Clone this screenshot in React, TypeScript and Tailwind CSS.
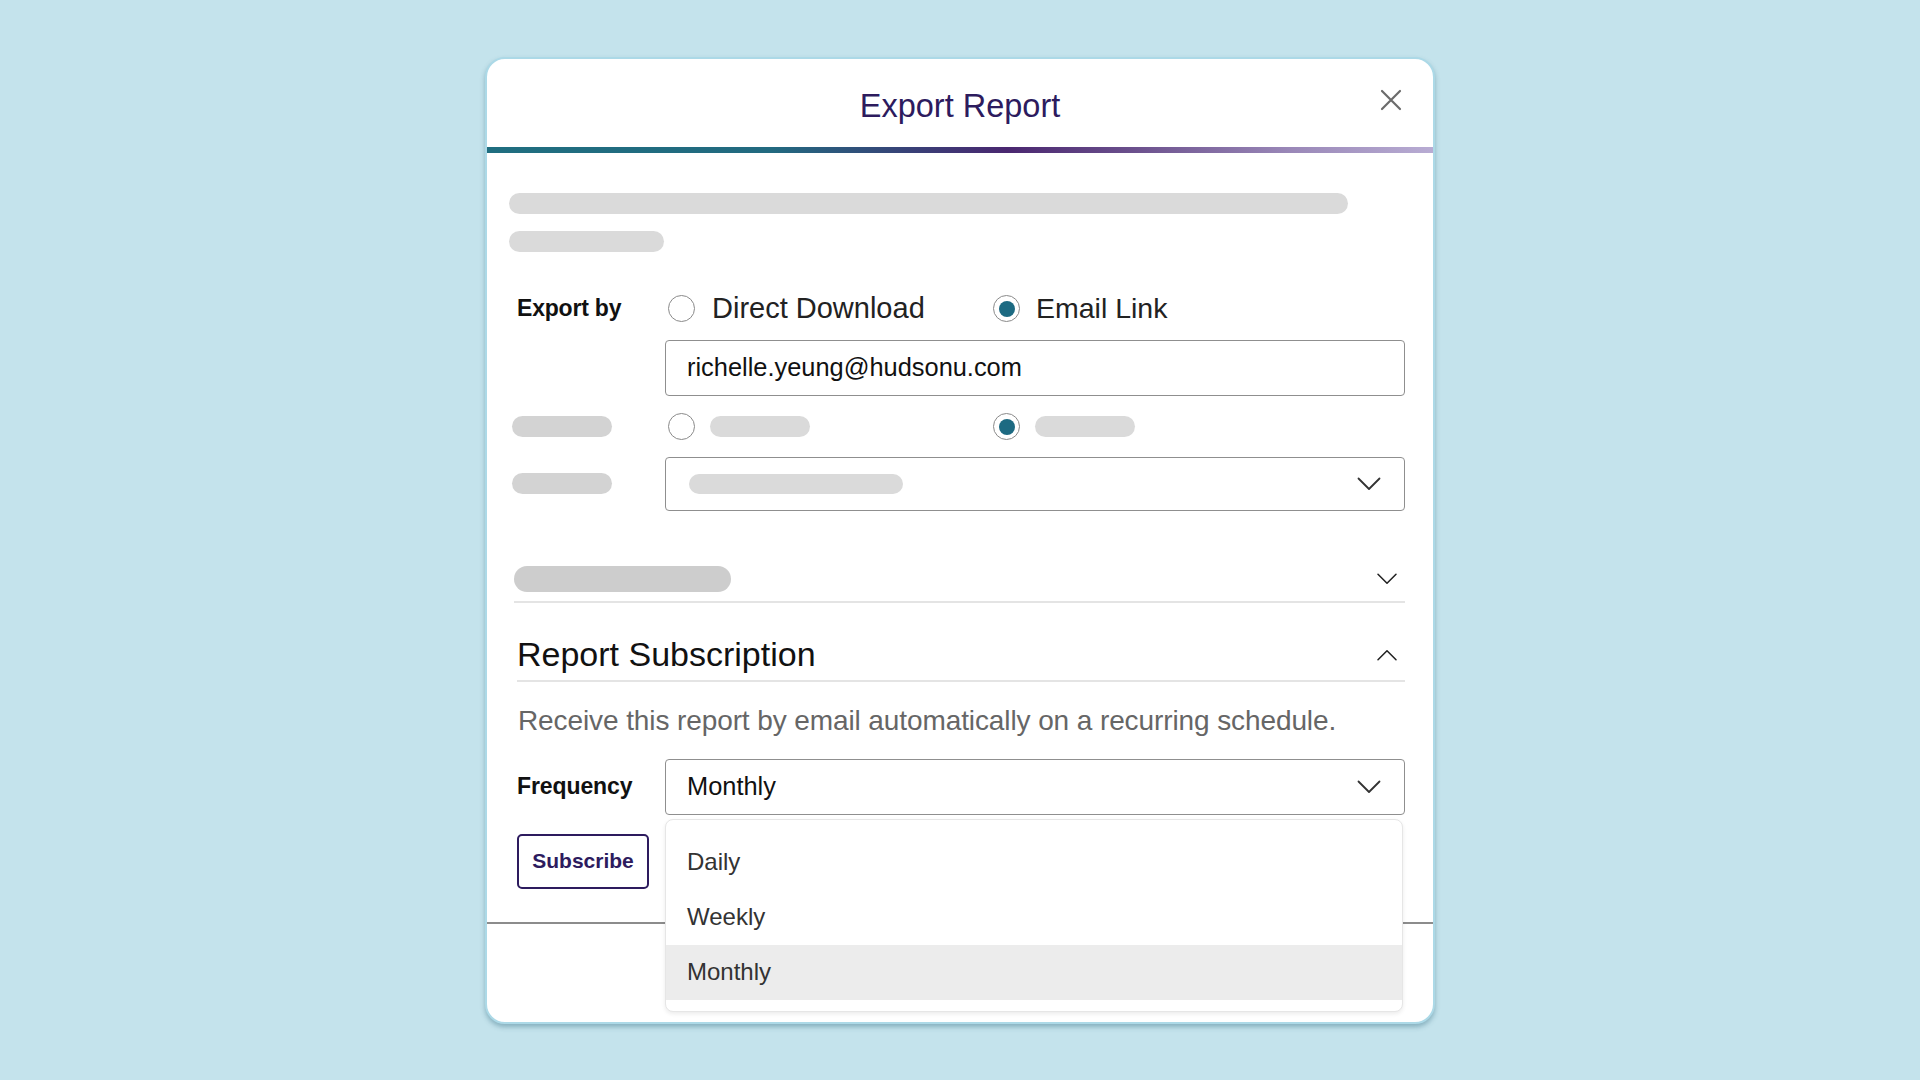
import React from "react";

const font = { fontFamily: "'Liberation Sans', Arial, sans-serif" };

function Radio({ checked }: { checked?: boolean }) {
  return (
    <span className="flex h-[27px] w-[27px] shrink-0 items-center justify-center rounded-full border-[1.5px] border-[#8a8a8a] bg-white">
      {checked && <span className="h-[16px] w-[16px] rounded-full bg-[#1d6a82]" />}
    </span>
  );
}

function Chevron({ up, className }: { up?: boolean; className?: string }) {
  return (
    <svg viewBox="0 0 24 14" fill="none" className={className}>
      <path
        d={up ? "M1.5 12.5 L12 2 L22.5 12.5" : "M1.5 1.5 L12 12 L22.5 1.5"}
        stroke="currentColor"
        strokeWidth="1.8"
        strokeLinecap="round"
        strokeLinejoin="round"
      />
    </svg>
  );
}

function Skeleton({ className }: { className: string }) {
  return <div className={`rounded-full ${className}`} />;
}

export default function App() {
  const options = ["Daily", "Weekly", "Monthly"];
  return (
    <div style={font} className="flex min-h-screen items-center justify-center bg-[#c4e3ec]">
      <div className="relative flex h-[967px] w-[950px] flex-col rounded-[20px] border-2 border-[#acd9e7] bg-white shadow-[0_3px_5px_rgba(60,115,135,0.45)]">
        {/* header */}
        <div className="relative flex h-[88px] shrink-0 items-center justify-center">
          <h1 className="mt-[8px] text-[32.5px] text-[#2d1b5e]">Export Report</h1>
          <button className="absolute right-[31px] top-[30px] text-[#6b6b6b]" aria-label="Close">
            <svg viewBox="0 0 22 22" className="h-[22px] w-[22px]" fill="none">
              <path d="M2 2 L20 20 M20 2 L2 20" stroke="currentColor" strokeWidth="2.2" strokeLinecap="round" />
            </svg>
          </button>
        </div>
        <div className="h-[6px] shrink-0 bg-[linear-gradient(90deg,#1f6e80_0%,#226a80_30%,#3a3d76_46%,#4a2770_55%,#6a4f8c_68%,#9a88b8_85%,#b8acd3_100%)]" />

        {/* body */}
        <div className="flex flex-col pl-[25px] pr-[28px]">
          <Skeleton className="-ml-[3px] mt-[40px] h-[21px] w-[839px] bg-[#dadada]" />
          <Skeleton className="-ml-[3px] mt-[17px] h-[21px] w-[155px] bg-[#dadada]" />

          <div className="mt-[40px] flex h-[34px] items-center">
            <div className="w-[153px] pl-[5px] text-[23px] font-bold tracking-[-0.2px] text-[#111]">Export by</div>
            <div className="flex items-center">
              <div className="ml-[3px] flex w-[325px] items-center gap-[17px]">
                <Radio />
                <span className="text-[29px] text-[#222]">Direct Download</span>
              </div>
              <div className="flex items-center gap-[16px]">
                <Radio checked />
                <span className="text-[28.5px] text-[#222]">Email Link</span>
              </div>
            </div>
          </div>

          <div className="mt-[14px] flex">
            <div className="w-[153px]" />
            <div className="flex h-[56px] w-[740px] items-center rounded-[4px] border-[1.5px] border-[#8f8f8f] px-[21px] text-[25.4px] text-[#111]">
              richelle.yeung@hudsonu.com
            </div>
          </div>

          <div className="mt-[14px] flex h-[34px] items-center">
            <div className="w-[153px]">
              <Skeleton className="h-[21px] w-[100px] bg-[#d3d3d3]" />
            </div>
            <div className="flex items-center">
              <div className="ml-[3px] flex w-[325px] items-center gap-[15px]">
                <Radio />
                <Skeleton className="h-[21px] w-[100px] bg-[#dadada]" />
              </div>
              <div className="flex items-center gap-[15px]">
                <Radio checked />
                <Skeleton className="h-[21px] w-[100px] bg-[#dadada]" />
              </div>
            </div>
          </div>

          <div className="mt-[13px] flex items-center">
            <div className="w-[153px]">
              <Skeleton className="h-[21px] w-[100px] bg-[#d3d3d3]" />
            </div>
            <div className="flex h-[54px] w-[740px] items-center justify-between rounded-[4px] border-[1.5px] border-[#8f8f8f] pl-[23px] pr-[23px]">
              <Skeleton className="h-[20px] w-[214px] bg-[#dadada]" />
              <Chevron className="h-[14px] w-[24px] text-[#333]" />
            </div>
          </div>

          {/* collapsed accordion */}
          <div className="ml-[2px] mt-[48px] flex h-[44px] items-center justify-between border-b-2 border-[#e4e4e4] pb-[2px]">
            <Skeleton className="h-[26px] w-[217px] bg-[#cdcdcd]" />
            <Chevron className="mr-[7px] h-[12px] w-[22px] text-[#222]" />
          </div>

          {/* report subscription */}
          <div className="ml-[5px] mt-[23px] flex h-[56px] items-center justify-between border-b-2 border-[#e4e4e4] pt-[4px]">
            <h2 className="text-[34px] text-[#111]">Report Subscription</h2>
            <Chevron up className="mr-[7px] h-[12px] w-[22px] text-[#222]" />
          </div>

          <p className="ml-[6px] mt-[23px] text-[28px] leading-[32px] tracking-[-0.1px] text-[#666]">
            Receive this report by email automatically on a recurring schedule.
          </p>

          <div className="mt-[22px] flex items-center">
            <div className="w-[153px] pl-[5px] text-[23px] font-bold tracking-[-0.1px] text-[#111]">Frequency</div>
            <div className="relative w-[740px]">
              <div className="flex h-[56px] items-center justify-between rounded-[4px] border-[1.5px] border-[#8f8f8f] pl-[21px] pr-[23px]">
                <span className="text-[25.4px] text-[#111]">Monthly</span>
                <Chevron className="h-[14px] w-[24px] text-[#333]" />
              </div>
              <ul className="absolute left-0 top-full z-10 mt-[4px] w-[738px] rounded-[8px] border border-[#e6e6e6] bg-white pb-[11px] pt-[15px] shadow-[0_2px_4px_rgba(0,0,0,0.08)]">
                {options.map((o) => (
                  <li
                    key={o}
                    className={`flex h-[55px] items-center px-[21px] text-[24px] text-[#333] ${o === "Monthly" ? "bg-[#ececec]" : ""}`}
                  >
                    {o}
                  </li>
                ))}
              </ul>
            </div>
          </div>

          <button className="ml-[5px] mt-[19px] flex h-[55px] w-[132px] items-center justify-center rounded-[5px] border-2 border-[#2d1b5e] text-[21px] font-bold text-[#2d1b5e]">
            Subscribe
          </button>
        </div>

        {/* footer */}
        <div className="mt-[33px] h-[2px] shrink-0 bg-[#8c8c8c]" />
        <div className="flex-1" />
      </div>
    </div>
  );
}
